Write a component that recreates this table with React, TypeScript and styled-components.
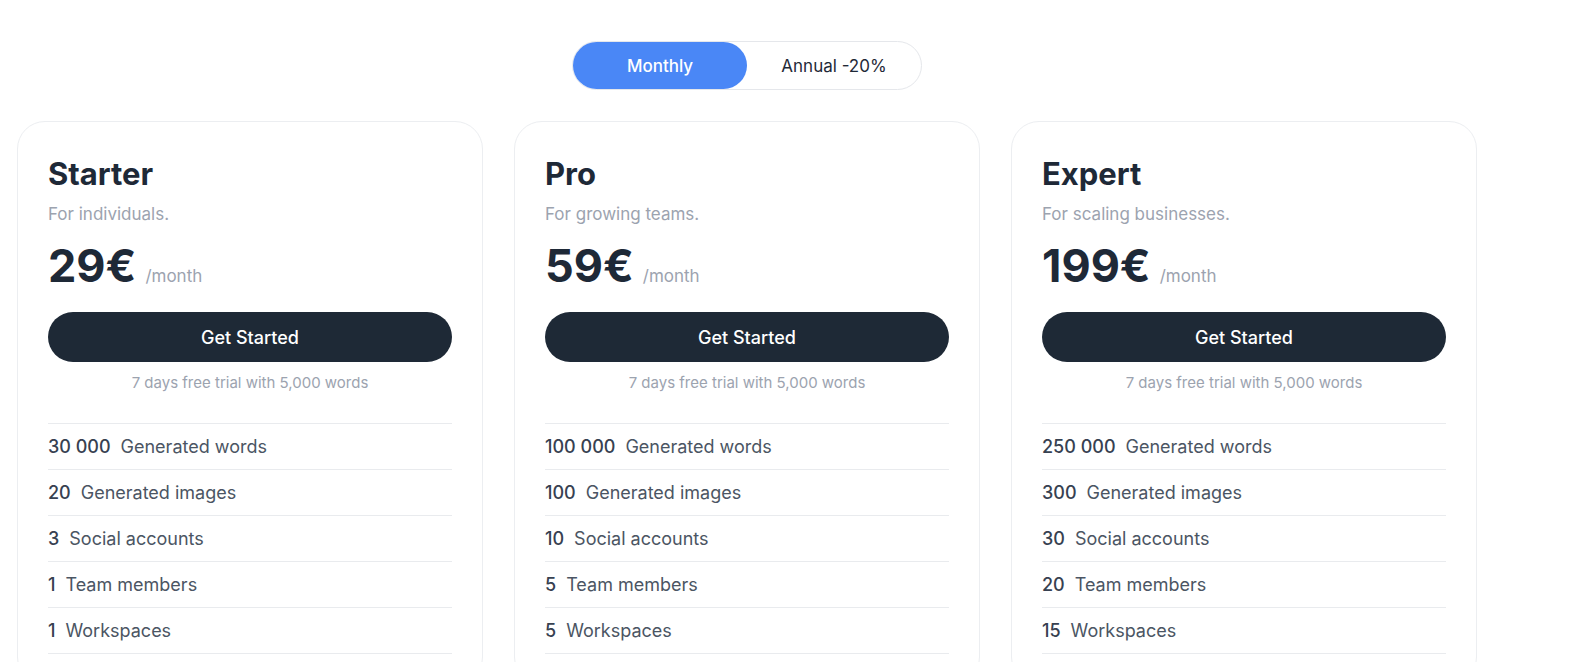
import React, { useState } from "react";
import styled, { createGlobalStyle } from "styled-components";

const GlobalStyle = createGlobalStyle`
  body {
    margin: 0;
    background: #ffffff;
    font-family: Inter, "Noto Sans", "Liberation Sans", sans-serif;
    color: #1f2937;
  }
`;

const Page = styled.div`
  padding: 41px 0 0 17px;
`;

const Container = styled.div`
  width: 1460px;
  display: flex;
  flex-direction: column;
  align-items: center;
`;

const Toggle = styled.div`
  display: flex;
  width: 350px;
  height: 49px;
  box-sizing: border-box;
  border: 1px solid #e5e7eb;
  border-radius: 999px;
`;

const ToggleButton = styled.button<{ $active: boolean }>`
  flex: 1;
  border: none;
  border-radius: 999px;
  font-family: inherit;
  font-size: 17px;
  font-weight: ${(p) => (p.$active ? 500 : 400)};
  background: ${(p) => (p.$active ? "#4a87f6" : "transparent")};
  color: ${(p) => (p.$active ? "#ffffff" : "#1f2937")};
  cursor: pointer;
`;

const Grid = styled.div`
  margin-top: 31px;
  display: grid;
  grid-template-columns: repeat(3, 466px);
  gap: 31px;
  width: 100%;
`;

const Card = styled.div`
  border: 1px solid #eceef1;
  border-radius: 28px;
  padding: 34px 30px 30px;
  display: flex;
  flex-direction: column;
`;

const Title = styled.h2`
  margin: 0;
  font-size: 31px;
  line-height: 35px;
  font-weight: 700;
  color: #1e2937;
`;

const Subtitle = styled.p`
  margin: 11px 0 0;
  font-size: 17px;
  line-height: 24px;
  color: #9ca3af;
`;

const PriceRow = styled.div`
  margin-top: 12px;
  display: flex;
  align-items: baseline;
  gap: 9px;
`;

const Price = styled.span`
  font-size: 45px;
  line-height: 56px;
  font-weight: 700;
  color: #1e2937;
`;

const Period = styled.span`
  font-size: 17px;
  color: #9ca3af;
`;

const CtaButton = styled.button`
  margin-top: 18px;
  height: 50px;
  border: none;
  border-radius: 999px;
  background: #1e2936;
  color: #ffffff;
  font-family: inherit;
  font-size: 18px;
  font-weight: 500;
  cursor: pointer;
`;

const Trial = styled.p`
  margin: 11px 0 0;
  text-align: center;
  font-size: 15px;
  line-height: 20px;
  color: #9ca3af;
`;

const Features = styled.ul`
  list-style: none;
  margin: 30px 0 0;
  padding: 0;
  border-top: 1px solid #e9ebee;
`;

const Feature = styled.li`
  height: 45px;
  display: flex;
  align-items: center;
  gap: 10px;
  border-bottom: 1px solid #e9ebee;
  font-size: 18px;
  color: #4b5563;
`;

const Amount = styled.span`
  font-weight: 500;
  color: #374151;
`;

type Plan = {
  name: string;
  tagline: string;
  price: string;
  features: [string, string][];
};

const plans: Plan[] = [
  {
    name: "Starter",
    tagline: "For individuals.",
    price: "29€",
    features: [
      ["30 000", "Generated words"],
      ["20", "Generated images"],
      ["3", "Social accounts"],
      ["1", "Team members"],
      ["1", "Workspaces"],
    ],
  },
  {
    name: "Pro",
    tagline: "For growing teams.",
    price: "59€",
    features: [
      ["100 000", "Generated words"],
      ["100", "Generated images"],
      ["10", "Social accounts"],
      ["5", "Team members"],
      ["5", "Workspaces"],
    ],
  },
  {
    name: "Expert",
    tagline: "For scaling businesses.",
    price: "199€",
    features: [
      ["250 000", "Generated words"],
      ["300", "Generated images"],
      ["30", "Social accounts"],
      ["20", "Team members"],
      ["15", "Workspaces"],
    ],
  },
];

const App = () => {
  const [billing, setBilling] = useState<"monthly" | "annual">("monthly");

  return (
    <>
      <GlobalStyle />
      <Page>
        <Container>
          <Toggle>
            <ToggleButton
              $active={billing === "monthly"}
              onClick={() => setBilling("monthly")}
            >
              Monthly
            </ToggleButton>
            <ToggleButton
              $active={billing === "annual"}
              onClick={() => setBilling("annual")}
            >
              Annual -20%
            </ToggleButton>
          </Toggle>
          <Grid>
            {plans.map((plan) => (
              <Card key={plan.name}>
                <Title>{plan.name}</Title>
                <Subtitle>{plan.tagline}</Subtitle>
                <PriceRow>
                  <Price>{plan.price}</Price>
                  <Period>/month</Period>
                </PriceRow>
                <CtaButton>Get Started</CtaButton>
                <Trial>7 days free trial with 5,000 words</Trial>
                <Features>
                  {plan.features.map(([amount, label]) => (
                    <Feature key={label}>
                      <Amount>{amount}</Amount>
                      {label}
                    </Feature>
                  ))}
                </Features>
              </Card>
            ))}
          </Grid>
        </Container>
      </Page>
    </>
  );
};

export default App;
